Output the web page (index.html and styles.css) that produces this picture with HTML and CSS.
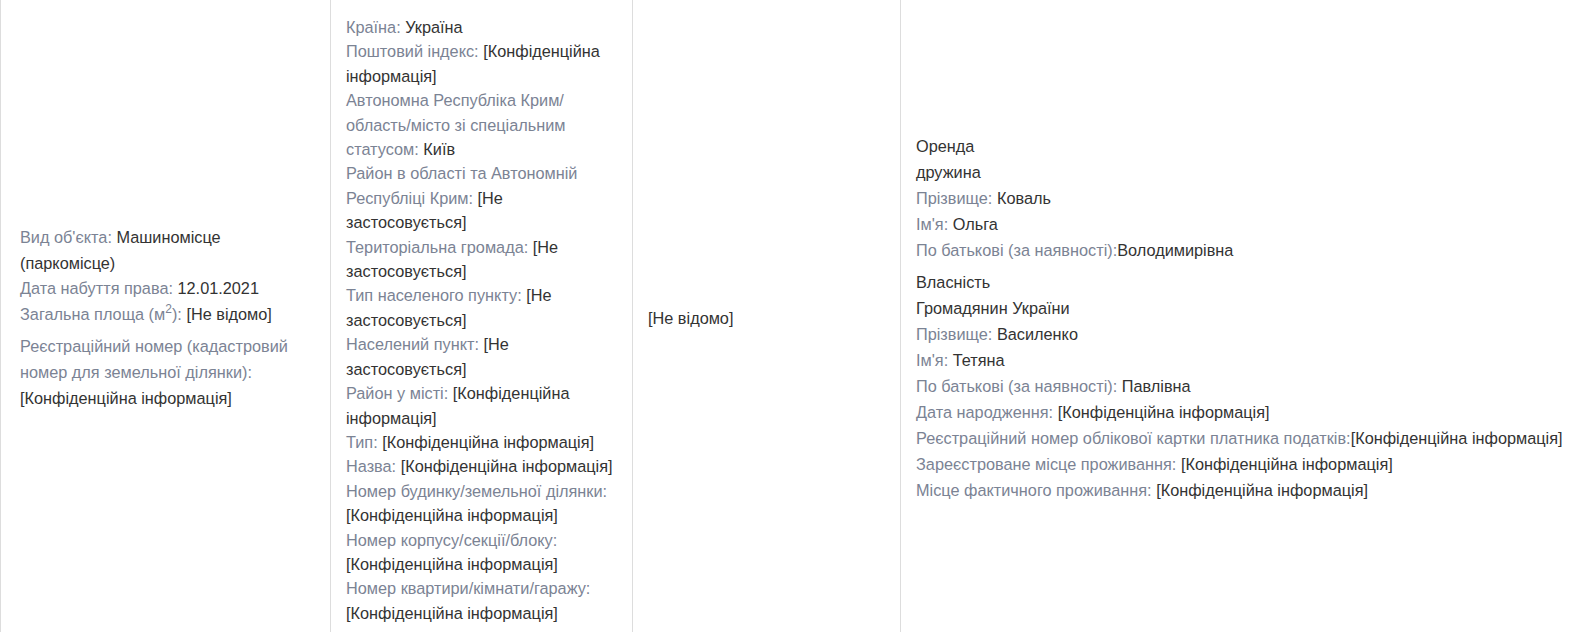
FILE: index.html
```html
<!DOCTYPE html>
<html lang="uk">
<head>
<meta charset="utf-8">
<link rel="stylesheet" href="styles.css">
</head>
<body>
<table class="reg">
  <tr>
    <td class="c1">
      <div class="blk">
        <div><span class="lbl">Вид об'єкта:</span> Машиномісце (паркомісце)</div>
        <div><span class="lbl">Дата набуття права:</span> 12.01.2021</div>
        <div><span class="lbl">Загальна площа (м<sup>2</sup>):</span> [Не відомо]</div>
      </div>
      <div class="blk">
        <div><span class="lbl">Реєстраційний номер (кадастровий номер для земельної ділянки):</span> [Конфіденційна інформація]</div>
      </div>
    </td>
    <td class="c2">
      <div><span class="lbl">Країна:</span> Україна</div>
      <div><span class="lbl">Поштовий індекс:</span> [Конфіденційна інформація]</div>
      <div><span class="lbl">Автономна Республіка Крим/ область/місто зі спеціальним статусом:</span> Київ</div>
      <div><span class="lbl">Район в області та Автономній Республіці Крим:</span> [Не застосовується]</div>
      <div><span class="lbl">Територіальна громада:</span> [Не застосовується]</div>
      <div><span class="lbl">Тип населеного пункту:</span> [Не застосовується]</div>
      <div><span class="lbl">Населений пункт:</span> [Не застосовується]</div>
      <div><span class="lbl">Район у місті:</span> [Конфіденційна інформація]</div>
      <div><span class="lbl">Тип:</span> [Конфіденційна інформація]</div>
      <div><span class="lbl">Назва:</span> [Конфіденційна інформація]</div>
      <div><span class="lbl">Номер будинку/земельної ділянки:</span> [Конфіденційна інформація]</div>
      <div><span class="lbl">Номер корпусу/секції/блоку:</span> [Конфіденційна інформація]</div>
      <div><span class="lbl">Номер квартири/кімнати/гаражу:</span> [Конфіденційна інформація]</div>
    </td>
    <td class="c3">[Не відомо]</td>
    <td class="c4">
      <div class="blk">
        <div>Оренда</div>
        <div>дружина</div>
        <div><span class="lbl">Прізвище:</span> Коваль</div>
        <div><span class="lbl">Ім'я:</span> Ольга</div>
        <div><span class="lbl">По батькові (за наявності):</span>Володимирівна</div>
      </div>
      <div class="blk">
        <div>Власність</div>
        <div>Громадянин України</div>
        <div><span class="lbl">Прізвище:</span> Василенко</div>
        <div><span class="lbl">Ім'я:</span> Тетяна</div>
        <div><span class="lbl">По батькові (за наявності):</span> Павлівна</div>
        <div><span class="lbl">Дата народження:</span> [Конфіденційна інформація]</div>
        <div><span class="lbl">Реєстраційний номер облікової картки платника податків:</span>[Конфіденційна інформація]</div>
        <div><span class="lbl">Зареєстроване місце проживання:</span> [Конфіденційна інформація]</div>
        <div><span class="lbl">Місце фактичного проживання:</span> [Конфіденційна інформація]</div>
      </div>
    </td>
  </tr>
</table>
</body>
</html>
```

FILE: styles.css
```css
html, body {
  margin: 0;
  padding: 0;
  background: #fff;
}
body {
  font-family: "Liberation Sans", Arial, sans-serif;
  font-size: 16.3px;
  color: #333;
}
.reg {
  border-collapse: collapse;
  width: 1600px;
  table-layout: fixed;
}
.reg td {
  border-left: 1px solid #ddd;
  vertical-align: middle;
  padding: 15px 15px 19px 15px;
}
.reg .c1 { width: 295px; padding-left: 19px; line-height: 25.8px; }
.reg .c2 { width: 271px; line-height: 24.4px; padding-bottom: 15px; }
.reg .c3 { width: 237px; }
.reg .c4 { line-height: 26px; }
.lbl { color: #7b8394; }
.blk + .blk { margin-top: 6px; }
sup {
  font-size: 12px;
  line-height: 0;
  vertical-align: 7px;
}
```
